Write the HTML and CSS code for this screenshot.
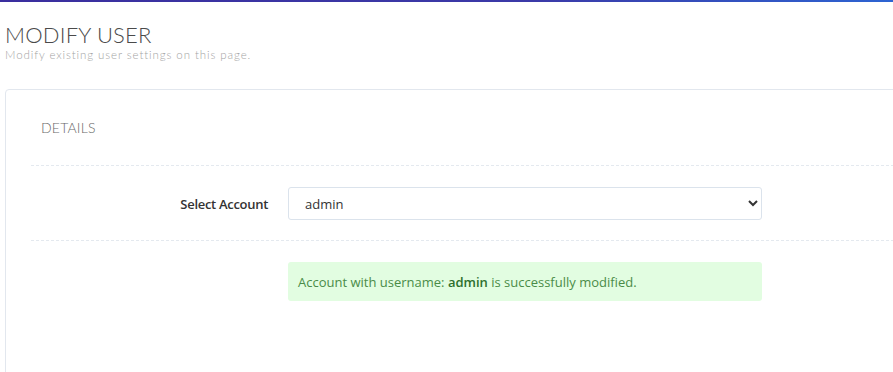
FILE: index.html
```html
<!DOCTYPE html>
<html lang="en">
<head>
  <meta charset="UTF-8">
  <title>Modify User</title>
  <link rel="stylesheet" href="styles.css">
</head>
<body>
  <div class="topbar"></div>
  <div class="page-head">
    <h1>MODIFY USER</h1>
    <p>Modify existing user settings on this page.</p>
  </div>
  <div class="card">
    <h2>DETAILS</h2>
    <div class="row">
      <label for="account">Select Account</label>
      <div class="field">
        <select id="account">
          <option>admin</option>
        </select>
      </div>
    </div>
    <div class="row row-msg">
      <div class="spacer"></div>
      <div class="field">
        <div class="alert">Account with username: <b>admin</b> is successfully modified.</div>
      </div>
    </div>
  </div>
</body>
</html>
```

FILE: styles.css
```css
/* base */
html, body { margin: 0; padding: 0; height: 100%; overflow: hidden; }
body { font-family: 'Open Sans', sans-serif; background: #fff; color: #333; }
.topbar { height: 2px; background: linear-gradient(to right, #3a2e9e, #3b3aa8 60%, #2d64d2); }
/* page heading */
.page-head { padding: 20px 5px 0; }
.page-head h1 { margin: 0; font-family: 'Lato', sans-serif; font-weight: 300; font-size: 22px; line-height: 26px; color: #4a4a4a; letter-spacing: 0.2px; }
.page-head p { margin: 0; font-family: 'Lato', sans-serif; font-weight: 300; font-size: 11.5px; line-height: 14px; color: #a3a3a3; letter-spacing: 0.9px; }
/* card */
.card { margin: 27px 0 0 5px; width: 930px; height: 300px; border: 1px solid #e2e7ee; border-radius: 4px; padding: 0 25px; box-sizing: border-box; }
.card h2 { margin: 0; padding: 29px 10px 29px; font-family: 'Lato', sans-serif; font-weight: 300; font-size: 14px; line-height: 17px; color: #6a6a6a; letter-spacing: 0.2px; border-bottom: 1px dashed #e4e9ef; }
.row { display: flex; align-items: center; gap: 20px; padding: 21px 0 20px; border-bottom: 1px dashed #e4e9ef; }
.row label, .row .spacer { width: 237px; text-align: right; font-size: 13px; font-weight: 600; color: #333; letter-spacing: -0.3px; }
.row-msg { border-bottom: none; }
.field { width: 474px; }
select { width: 100%; height: 33px; padding: 0 12px 0 12px; border: 1px solid #dbe3ec; border-radius: 3px; background: #fff; font-family: 'Open Sans', sans-serif; font-size: 13px; color: #333; }
.alert { height: 39px; padding: 0 10px; display: flex; align-items: center; background: #e2fde1; border-radius: 3px; font-size: 13px; color: #4a8c48; white-space: pre; }
.alert b { font-weight: 600; color: #2f702e; }
```
